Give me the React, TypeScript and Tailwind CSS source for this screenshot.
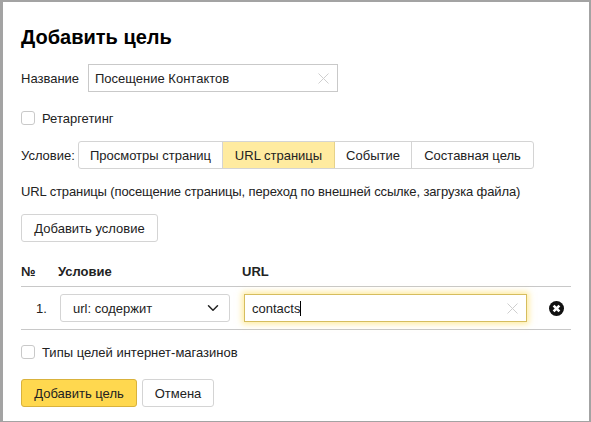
import { ChevronDown } from "lucide-react";

function Clear() {
  return (
    <svg width="13" height="13" viewBox="0 0 13 13" className="shrink-0 text-[#cfcfcf]">
      <path d="M1.5 1.5l10 10M11.5 1.5l-10 10" stroke="currentColor" strokeWidth="1" fill="none" />
    </svg>
  );
}

function Check({ label }: { label: string }) {
  return (
    <label className="flex items-center gap-[7px] h-[14px]">
      <span className="w-[14px] h-[14px] rounded-[3px] border border-[#c9c9c9] bg-white" />
      <span>{label}</span>
    </label>
  );
}

export default function App() {
  const tabs = ["Просмотры страниц", "URL страницы", "Событие", "Составная цель"];
  const widths = ["w-[144px]", "w-[112px]", "w-[77px]", "w-[121px]"];

  return (
    <div
      className="w-[591px] h-[422px] overflow-hidden bg-[#a3a3a3] pt-[2px] pl-[3px] pr-[2px] text-[13px] leading-[15px] text-[#222]"
      style={{ fontFamily: '"Liberation Sans", Arial, sans-serif' }}
    >
      <div className="h-[419px] bg-white pl-[18px] pr-[18px]">
        <h1 className="pt-[24px] text-[20px] leading-[23px] font-bold text-black">Добавить цель</h1>

        <div className="mt-[15px] flex items-center h-[28px]">
          <span className="w-[67px]">Название</span>
          <div className="w-[250px] h-[28px] flex items-center justify-between border border-[#c9c9c9] pl-[6px] pr-[7px]">
            <span>Посещение Контактов</span>
            <Clear />
          </div>
        </div>

        <div className="mt-[19px]">
          <Check label="Ретаргетинг" />
        </div>

        <div className="mt-[16px] flex items-center">
          <span className="w-[57px]">Условие:</span>
          <div className="flex h-[28px] rounded-[3px] border border-[#d4d4d4]">
            {tabs.map((t, i) => (
              <div
                key={t}
                className={`flex items-center justify-center border-r last:border-r-0 ${widths[i]} ${
                  i === 1 ? "bg-[#ffeba0] border-[#e6d28a]" : "border-[#d4d4d4]"
                }`}
              >
                {t}
              </div>
            ))}
          </div>
        </div>

        <p className="mt-[15px] tracking-[-0.12px]">
          URL страницы (посещение страницы, переход по внешней ссылке, загрузка файла)
        </p>

        <button className="mt-[15px] block w-[137px] h-[28px] rounded-[3px] border border-[#d4d4d4] bg-white">
          Добавить условие
        </button>

        <div className="mt-[22px] flex w-[550px] h-[15px] font-bold">
          <span className="w-[37px]">№</span>
          <span className="w-[184px]">Условие</span>
          <span>URL</span>
        </div>

        <div className="mt-[7px] w-[550px] h-[44px] flex items-center border-y border-[#c8c8c8]">
          <span className="w-[39px] pl-[15px]">1.</span>
          <div className="w-[170px] h-[28px] flex items-center justify-between rounded-[3px] border border-[#d4d4d4] pl-[12px] pr-[7px]">
            <span>url: содержит</span>
            <ChevronDown className="w-[18px] h-[18px] text-[#222]" strokeWidth={2} />
          </div>
          <div className="ml-[14px] w-[283px] h-[28px] flex items-center justify-between border border-[#d6bd5e] shadow-[0_0_6px_2px_rgba(255,219,77,0.55)] pl-[7px] pr-[7px]">
            <span className="flex items-center">
              contacts
              <span className="w-px h-[15px] bg-black" />
            </span>
            <Clear />
          </div>
          <svg width="15" height="15" viewBox="0 0 15 15" className="ml-[22px] shrink-0">
            <circle cx="7.5" cy="7.5" r="7.5" fill="#111" />
            <path d="M4.6 4.6l5.8 5.8M10.4 4.6l-5.8 5.8" stroke="#fff" strokeWidth="2.6" />
          </svg>
        </div>

        <div className="mt-[15px]">
          <Check label="Типы целей интернет-магазинов" />
        </div>

        <div className="mt-[20px] flex gap-[5px]">
          <button className="w-[116px] h-[28px] rounded-[3px] border border-[#d9b23c] bg-[#ffd84f]">Добавить цель</button>
          <button className="w-[72px] h-[28px] rounded-[3px] border border-[#d4d4d4] bg-white">Отмена</button>
        </div>
      </div>
    </div>
  );
}
